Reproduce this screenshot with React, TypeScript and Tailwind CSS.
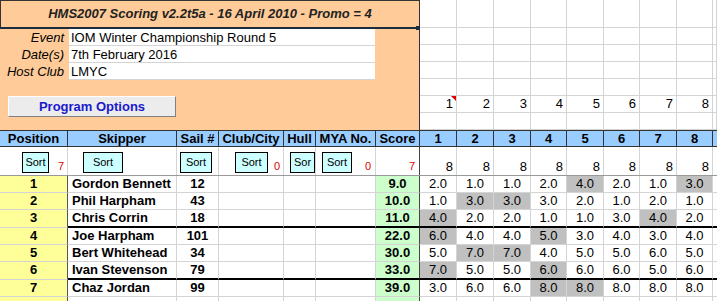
import React from "react";

const GRID =
  "grid grid-cols-[68px_109px_42px_65px_32px_60px_44px_37px_37px_37px_36px_37px_36px_37px_36px_4px]";
const RACE_GRID =
  "grid grid-cols-[37px_37px_37px_36px_37px_36px_37px_36px_4px] grid-rows-[28px_17px_17px_17px_17px_17px_17px]";

type Row = {
  pos: number;
  name: string;
  sail: string;
  score: string;
  races: string[];
  drop: number[];
  thick?: boolean;
};

const rows: Row[] = [
  { pos: 1, name: "Gordon Bennett", sail: "12", score: "9.0", races: ["2.0", "1.0", "1.0", "2.0", "4.0", "2.0", "1.0", "3.0"], drop: [4, 7] },
  { pos: 2, name: "Phil Harpham", sail: "43", score: "10.0", races: ["1.0", "3.0", "3.0", "3.0", "2.0", "1.0", "2.0", "1.0"], drop: [1, 2] },
  { pos: 3, name: "Chris Corrin", sail: "18", score: "11.0", races: ["4.0", "2.0", "2.0", "1.0", "1.0", "3.0", "4.0", "2.0"], drop: [0, 6], thick: true },
  { pos: 4, name: "Joe Harpham", sail: "101", score: "22.0", races: ["6.0", "4.0", "4.0", "5.0", "3.0", "4.0", "3.0", "4.0"], drop: [0, 3] },
  { pos: 5, name: "Bert Whitehead", sail: "34", score: "30.0", races: ["5.0", "7.0", "7.0", "4.0", "5.0", "5.0", "6.0", "5.0"], drop: [1, 2] },
  { pos: 6, name: "Ivan Stevenson", sail: "79", score: "33.0", races: ["7.0", "5.0", "5.0", "6.0", "6.0", "6.0", "5.0", "6.0"], drop: [0, 3], thick: true },
  { pos: 7, name: "Chaz Jordan", sail: "99", score: "39.0", races: ["3.0", "6.0", "6.0", "8.0", "8.0", "8.0", "8.0", "8.0"], drop: [3, 4] },
];

const headers = ["Position", "Skipper", "Sail #", "Club/City", "Hull", "MYA No.", "Score", "1", "2", "3", "4", "5", "6", "7", "8", ""];

function SortButton({ w, ml, label = "Sort" }: { w: string; ml: string; label?: string }) {
  return (
    <div className={`${w} ${ml} mt-[5px] h-[21px] shrink-0 border border-black bg-[#CCFFFF] flex items-center justify-center text-[11px] overflow-hidden`}>
      {label}
    </div>
  );
}

function Red({ v, pr }: { v: string; pr: string }) {
  return <span className={`ml-auto self-end ${pr} pb-[2px] text-[11px] leading-[13px] text-[#E00000]`}>{v}</span>;
}

export default function App() {
  const light = "border-[#d4d4d4]";
  return (
    <div className="w-[717px] h-[301px] overflow-hidden bg-white text-black font-['Liberation_Sans',Arial,sans-serif] text-[13px]">
      {/* top area */}
      <div className="flex h-[130px]">
        <div className="relative w-[420px] shrink-0 bg-[#FFCC99] border-r border-[#333]">
          <div className="h-[29px] border-t border-l border-[#333] border-b-2 border-b-[#1c2d3e] flex items-center justify-center font-bold italic text-[13px] text-[#222]">
            HMS2007 Scoring v2.2t5a - 16 April 2010 - Promo = 4
          </div>
          <div className="absolute left-[416px] top-[26px] w-[4px] h-[4px] bg-[#1c2d3e]" />
          {[
            ["Event", "IOM Winter Championship Round 5"],
            ["Date(s)", "7th February 2016"],
            ["Host Club", "LMYC"],
          ].map(([l, v]) => (
            <div key={l} className="flex h-[17px] leading-[17px]">
              <div className="w-[69px] pr-[5px] text-right italic">{l}</div>
              <div className={`w-[306px] bg-white border-b ${light} pl-[2px]`}>{v}</div>
            </div>
          ))}
          <div className="mt-[16px] ml-[8px] w-[168px] h-[21px] bg-[#ECECEC] border border-t-white border-l-white border-r-[#808080] border-b-[#808080] flex items-center justify-center font-bold text-[#1a1acc] text-[13px]">
            Program Options
          </div>
        </div>
        <div className={`${RACE_GRID} flex-1`}>
          {Array.from({ length: 7 * 9 }).map((_, i) => {
            const r = Math.floor(i / 9);
            const c = i % 9;
            return (
              <div key={i} className={`relative border-r border-b ${light} text-right pr-[3px] leading-[16px]`}>
                {r === 5 && c < 8 ? c + 1 : ""}
                {r === 5 && c === 0 && (
                  <div className="absolute top-0 right-0 w-0 h-0 border-l-[5px] border-l-transparent border-t-[5px] border-t-[#e00000]" />
                )}
              </div>
            );
          })}
        </div>
      </div>

      {/* header row */}
      <div className={`${GRID} h-[17px] bg-[#99CCFF] border-y border-[#333]`}>
        {headers.map((h, i) => (
          <div key={i} className={`${i < 15 ? "border-r border-[#333]" : ""} text-center font-bold text-[13px] leading-[15px]`}>
            {h}
          </div>
        ))}
      </div>

      {/* sort row */}
      <div className={`${GRID} h-[29px] border-b border-[#999]`}>
        <div className={`flex border-r ${light}`}>
          <SortButton w="w-[27px]" ml="ml-[22px]" />
          <Red v="7" pr="pr-[3px]" />
        </div>
        <div className={`flex border-r ${light}`}>
          <SortButton w="w-[40px]" ml="ml-[15px]" />
        </div>
        <div className={`flex border-r ${light}`}>
          <SortButton w="w-[32px]" ml="ml-[3px]" />
        </div>
        <div className={`flex border-r ${light}`}>
          <SortButton w="w-[33px]" ml="ml-[16px]" />
          <Red v="0" pr="pr-[3px]" />
        </div>
        <div className={`flex border-r ${light}`}>
          <SortButton w="w-[25px]" ml="ml-[6px]" label="Sor" />
        </div>
        <div className={`flex border-r ${light}`}>
          <SortButton w="w-[30px]" ml="ml-[6px]" />
          <Red v="0" pr="pr-[4px]" />
        </div>
        <div className="flex border-r border-[#444]">
          <Red v="7" pr="pr-[4px]" />
        </div>
        {Array.from({ length: 8 }).map((_, i) => (
          <div key={i} className={`flex items-end justify-end pr-[3px] pb-[1px] leading-[15px] border-r ${light}`}>
            8
          </div>
        ))}
        <div />
      </div>

      {/* data rows */}
      {rows.map((r) => {
        const h = r.thick ? "h-[18px]" : "h-[17px]";
        const b = r.thick ? "border-b-2 border-b-black" : `border-b ${light}`;
        return (
          <div key={r.pos} className={`${GRID} ${h} leading-[16px]`}>
            <div className={`bg-[#FFFF99] border-b ${light} border-r border-r-[#555] text-center font-bold`}>{r.pos}</div>
            <div className={`${b} border-r ${light} pl-[4px] font-bold`}>{r.name}</div>
            <div className={`${b} border-r ${light} text-center font-bold`}>{r.sail}</div>
            <div className={`${b} border-r ${light}`} />
            <div className={`${b} border-r ${light}`} />
            <div className={`${b} border-r ${light}`} />
            <div className={`${b} border-r border-r-[#444] bg-[#CCFFCC] text-center font-bold`}>{r.score}</div>
            {r.races.map((v, i) => (
              <div key={i} className={`${b} border-r ${light} text-center ${r.drop.includes(i) ? "bg-[#C0C0C0]" : ""}`}>
                {v}
              </div>
            ))}
            <div className={b} />
          </div>
        );
      })}
      <div className={`${GRID} h-[17px]`}>
        <div className="bg-[#FFFF99] border-r border-r-[#555]" />
        <div className={`border-r ${light}`} />
        <div className={`border-r ${light}`} />
        <div className={`border-r ${light}`} />
        <div className={`border-r ${light}`} />
        <div className={`border-r ${light}`} />
        <div className="border-r border-r-[#444] bg-[#CCFFCC]" />
        {Array.from({ length: 8 }).map((_, i) => (
          <div key={i} className={`border-r ${light}`} />
        ))}
        <div />
      </div>
    </div>
  );
}
